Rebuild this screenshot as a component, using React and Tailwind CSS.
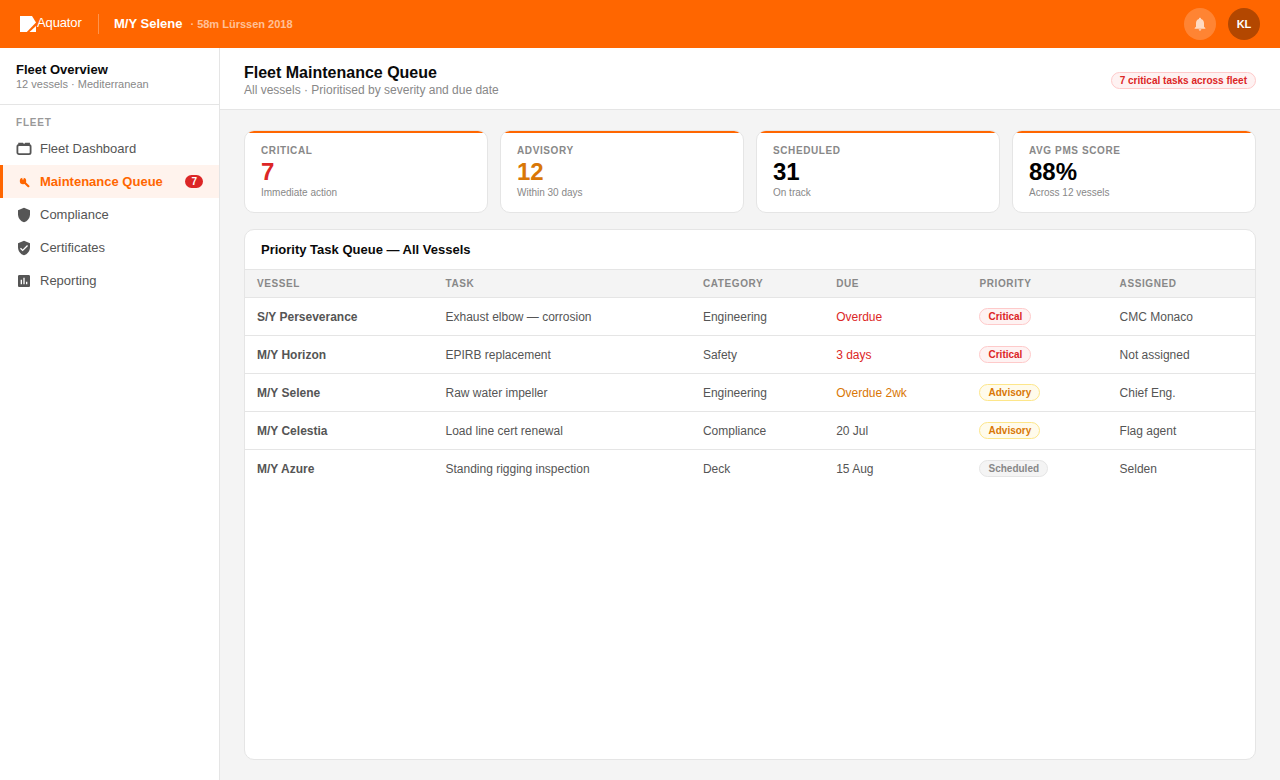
import { MdShield, MdVerifiedUser, MdAssessment, MdNotifications } from "react-icons/md";

const stats = [
  { label: "CRITICAL", value: "7", note: "Immediate action", color: "text-[#dc2626]" },
  { label: "ADVISORY", value: "12", note: "Within 30 days", color: "text-[#d97706]" },
  { label: "SCHEDULED", value: "31", note: "On track", color: "text-black" },
  { label: "AVG PMS SCORE", value: "88%", note: "Across 12 vessels", color: "text-black" },
];

const badges = {
  Critical: "bg-[#fef2f2] border-[#fecaca] text-[#dc2626]",
  Advisory: "bg-[#fffbeb] border-[#fde68a] text-[#d97706]",
  Scheduled: "bg-[#f4f4f4] border-[#e5e5e5] text-[#888]",
};

const rows = [
  { vessel: "S/Y Perseverance", task: "Exhaust elbow — corrosion", category: "Engineering", due: "Overdue", dueColor: "text-[#dc2626]", priority: "Critical", assigned: "CMC Monaco" },
  { vessel: "M/Y Horizon", task: "EPIRB replacement", category: "Safety", due: "3 days", dueColor: "text-[#dc2626]", priority: "Critical", assigned: "Not assigned" },
  { vessel: "M/Y Selene", task: "Raw water impeller", category: "Engineering", due: "Overdue 2wk", dueColor: "text-[#d97706]", priority: "Advisory", assigned: "Chief Eng." },
  { vessel: "M/Y Celestia", task: "Load line cert renewal", category: "Compliance", due: "20 Jul", dueColor: "text-[#555]", priority: "Advisory", assigned: "Flag agent" },
  { vessel: "M/Y Azure", task: "Standing rigging inspection", category: "Deck", due: "15 Aug", dueColor: "text-[#555]", priority: "Scheduled", assigned: "Selden" },
];

const FleetIcon = () => (
  <svg width="16" height="16" viewBox="0 0 16 16" fill="none">
    <path d="M3 3.6V2.4h3.6l.8 1h1.4l.8-1H13.2v1.2" stroke="#555" strokeWidth="1.5" />
    <rect x="1.4" y="4" width="13.2" height="9.2" rx="1.6" stroke="#555" strokeWidth="1.8" />
  </svg>
);

const WrenchIcon = () => (
  <svg width="12" height="12" viewBox="0 0 12 12">
    <circle cx="5" cy="5" r="3.2" fill="#ff6600" />
    <path d="M5 5l5.4 5.2" stroke="#ff6600" strokeWidth="2.2" strokeLinecap="round" />
    <path d="M3.8 1.2h2.4L5 4.2z" fill="#fff3ed" />
  </svg>
);

const navItems = [
  { label: "Fleet Dashboard", icon: <FleetIcon /> },
  { label: "Maintenance Queue", icon: <WrenchIcon />, active: true, badge: "7" },
  { label: "Compliance", icon: <MdShield size={16} /> },
  { label: "Certificates", icon: <MdVerifiedUser size={16} /> },
  { label: "Reporting", icon: <MdAssessment size={16} /> },
];

const headers = ["VESSEL", "TASK", "CATEGORY", "DUE", "PRIORITY", "ASSIGNED"];

export default function App() {
  return (
    <div className="h-[780px] flex flex-col bg-[#f4f4f4] overflow-hidden font-['Liberation_Sans',Arial,sans-serif]">
      <header className="h-12 shrink-0 bg-[#ff6600] flex items-center justify-between px-5 text-white">
        <div className="flex items-center">
          <div className="flex items-center w-[62px]">
            <svg width="16" height="16" viewBox="0 0 16 16" className="shrink-0">
              <path d="M0 0h12l4 6.5L6.8 16H0z" fill="#fff" />
              <path d="M9.5 16L16 10v6z" fill="#fff" />
            </svg>
            <span className="text-[13px] leading-none ml-[1px] mb-[3px] tracking-[-0.01em]">Aquator</span>
          </div>
          <div className="w-px h-5 bg-white/30 ml-4 mr-[15px]" />
          <span className="text-[13px] font-bold">M/Y Selene</span>
          <span className="text-[11px] font-bold text-white/60 ml-2">· 58m Lürssen 2018</span>
        </div>
        <div className="flex items-center gap-3">
          <div className="w-8 h-8 rounded-full bg-white/20 flex items-center justify-center">
            <MdNotifications size={16} className="text-white/70" />
          </div>
          <div className="w-8 h-8 rounded-full bg-[#b34700] flex items-center justify-center text-[11px] font-bold">KL</div>
        </div>
      </header>

      <div className="flex-1 flex min-h-0">
        <aside className="w-[220px] shrink-0 bg-white border-r border-[#e5e5e5]">
          <div className="h-[57px] px-4 pt-[14px] border-b border-[#e5e5e5]">
            <div className="text-[13px] leading-[15px] font-bold text-[#0a0a0a]">Fleet Overview</div>
            <div className="text-[11px] leading-[14px] text-[#888]">12 vessels · Mediterranean</div>
          </div>
          <div className="px-4 pt-3 pb-[3px] text-[10px] leading-3 font-bold tracking-[0.08em] text-[#999]">FLEET</div>
          <nav>
            {navItems.map((item) => (
              <div
                key={item.label}
                className={`h-[33px] flex items-center gap-2 pr-4 text-[13px] border-l-[3px] pl-[13px] ${item.active ? "bg-[#fff3ed] border-[#ff6600] text-[#ff6600] font-bold" : "border-transparent text-[#555]"}`}
              >
                <span className="w-4 h-4 flex items-center justify-center shrink-0">{item.icon}</span>
                <span className="flex-1">{item.label}</span>
                {item.badge && (
                  <span className="bg-[#dc2626] text-white text-[10px] leading-[13px] font-bold rounded-full px-[6px]">{item.badge}</span>
                )}
              </div>
            ))}
          </nav>
        </aside>

        <main className="flex-1 min-w-0 flex flex-col">
          <div className="h-[62px] shrink-0 bg-white border-b border-[#e5e5e5] px-6 pt-1 flex items-center justify-between">
            <div>
              <h1 className="text-base leading-[18px] font-bold text-[#0a0a0a]">Fleet Maintenance Queue</h1>
              <p className="text-xs leading-[16px] text-[#888]">All vessels · Prioritised by severity and due date</p>
            </div>
            <span className="text-[10px] leading-[15px] font-bold text-[#dc2626] bg-[#fef2f2] border border-[#fecaca] rounded-full px-2">7 critical tasks across fleet</span>
          </div>

          <div className="flex-1 flex flex-col min-h-0 px-6 pt-5 pb-5 gap-4">
            <div className="grid grid-cols-4 gap-3">
              {stats.map((s) => (
                <div key={s.label} className="h-[83px] bg-white border border-[#e5e5e5] rounded-[10px] overflow-hidden">
                  <div className="h-[2px] bg-[#ff6600]" />
                  <div className="px-4 pt-3">
                    <div className="text-[10px] leading-3 mb-[1px] font-bold tracking-[0.06em] text-[#888]">{s.label}</div>
                    <div className={`text-2xl leading-[27px] font-bold ${s.color}`}>{s.value}</div>
                    <div className="text-[10px] leading-3 mt-[2px] text-[#888]">{s.note}</div>
                  </div>
                </div>
              ))}
            </div>

            <div className="flex-1 min-h-0 bg-white border border-[#e5e5e5] rounded-[10px] overflow-hidden">
              <div className="h-[39px] px-4 flex items-center text-[13px] font-bold text-[#0a0a0a]">Priority Task Queue — All Vessels</div>
              <table className="w-full border-collapse text-xs">
                <thead>
                  <tr className="h-[28px] bg-[#f4f4f4] border-y border-[#e5e5e5]">
                    {headers.map((h) => (
                      <th key={h} className="px-3 text-left text-[10px] font-bold tracking-[0.06em] text-[#888]">{h}</th>
                    ))}
                  </tr>
                </thead>
                <tbody>
                  {rows.map((r) => (
                    <tr key={r.vessel} className="h-[38px] border-b border-[#e5e5e5] last:border-b-0 text-[#555]">
                      <td className="px-3 font-bold">{r.vessel}</td>
                      <td className="px-3">{r.task}</td>
                      <td className="px-3">{r.category}</td>
                      <td className={`px-3 ${r.dueColor}`}>{r.due}</td>
                      <td className="px-3">
                        <span className={`inline-block text-[10px] leading-[15px] font-bold border rounded-full px-2 ${badges[r.priority]}`}>{r.priority}</span>
                      </td>
                      <td className="px-3">{r.assigned}</td>
                    </tr>
                  ))}
                </tbody>
              </table>
            </div>
          </div>
        </main>
      </div>
    </div>
  );
}
